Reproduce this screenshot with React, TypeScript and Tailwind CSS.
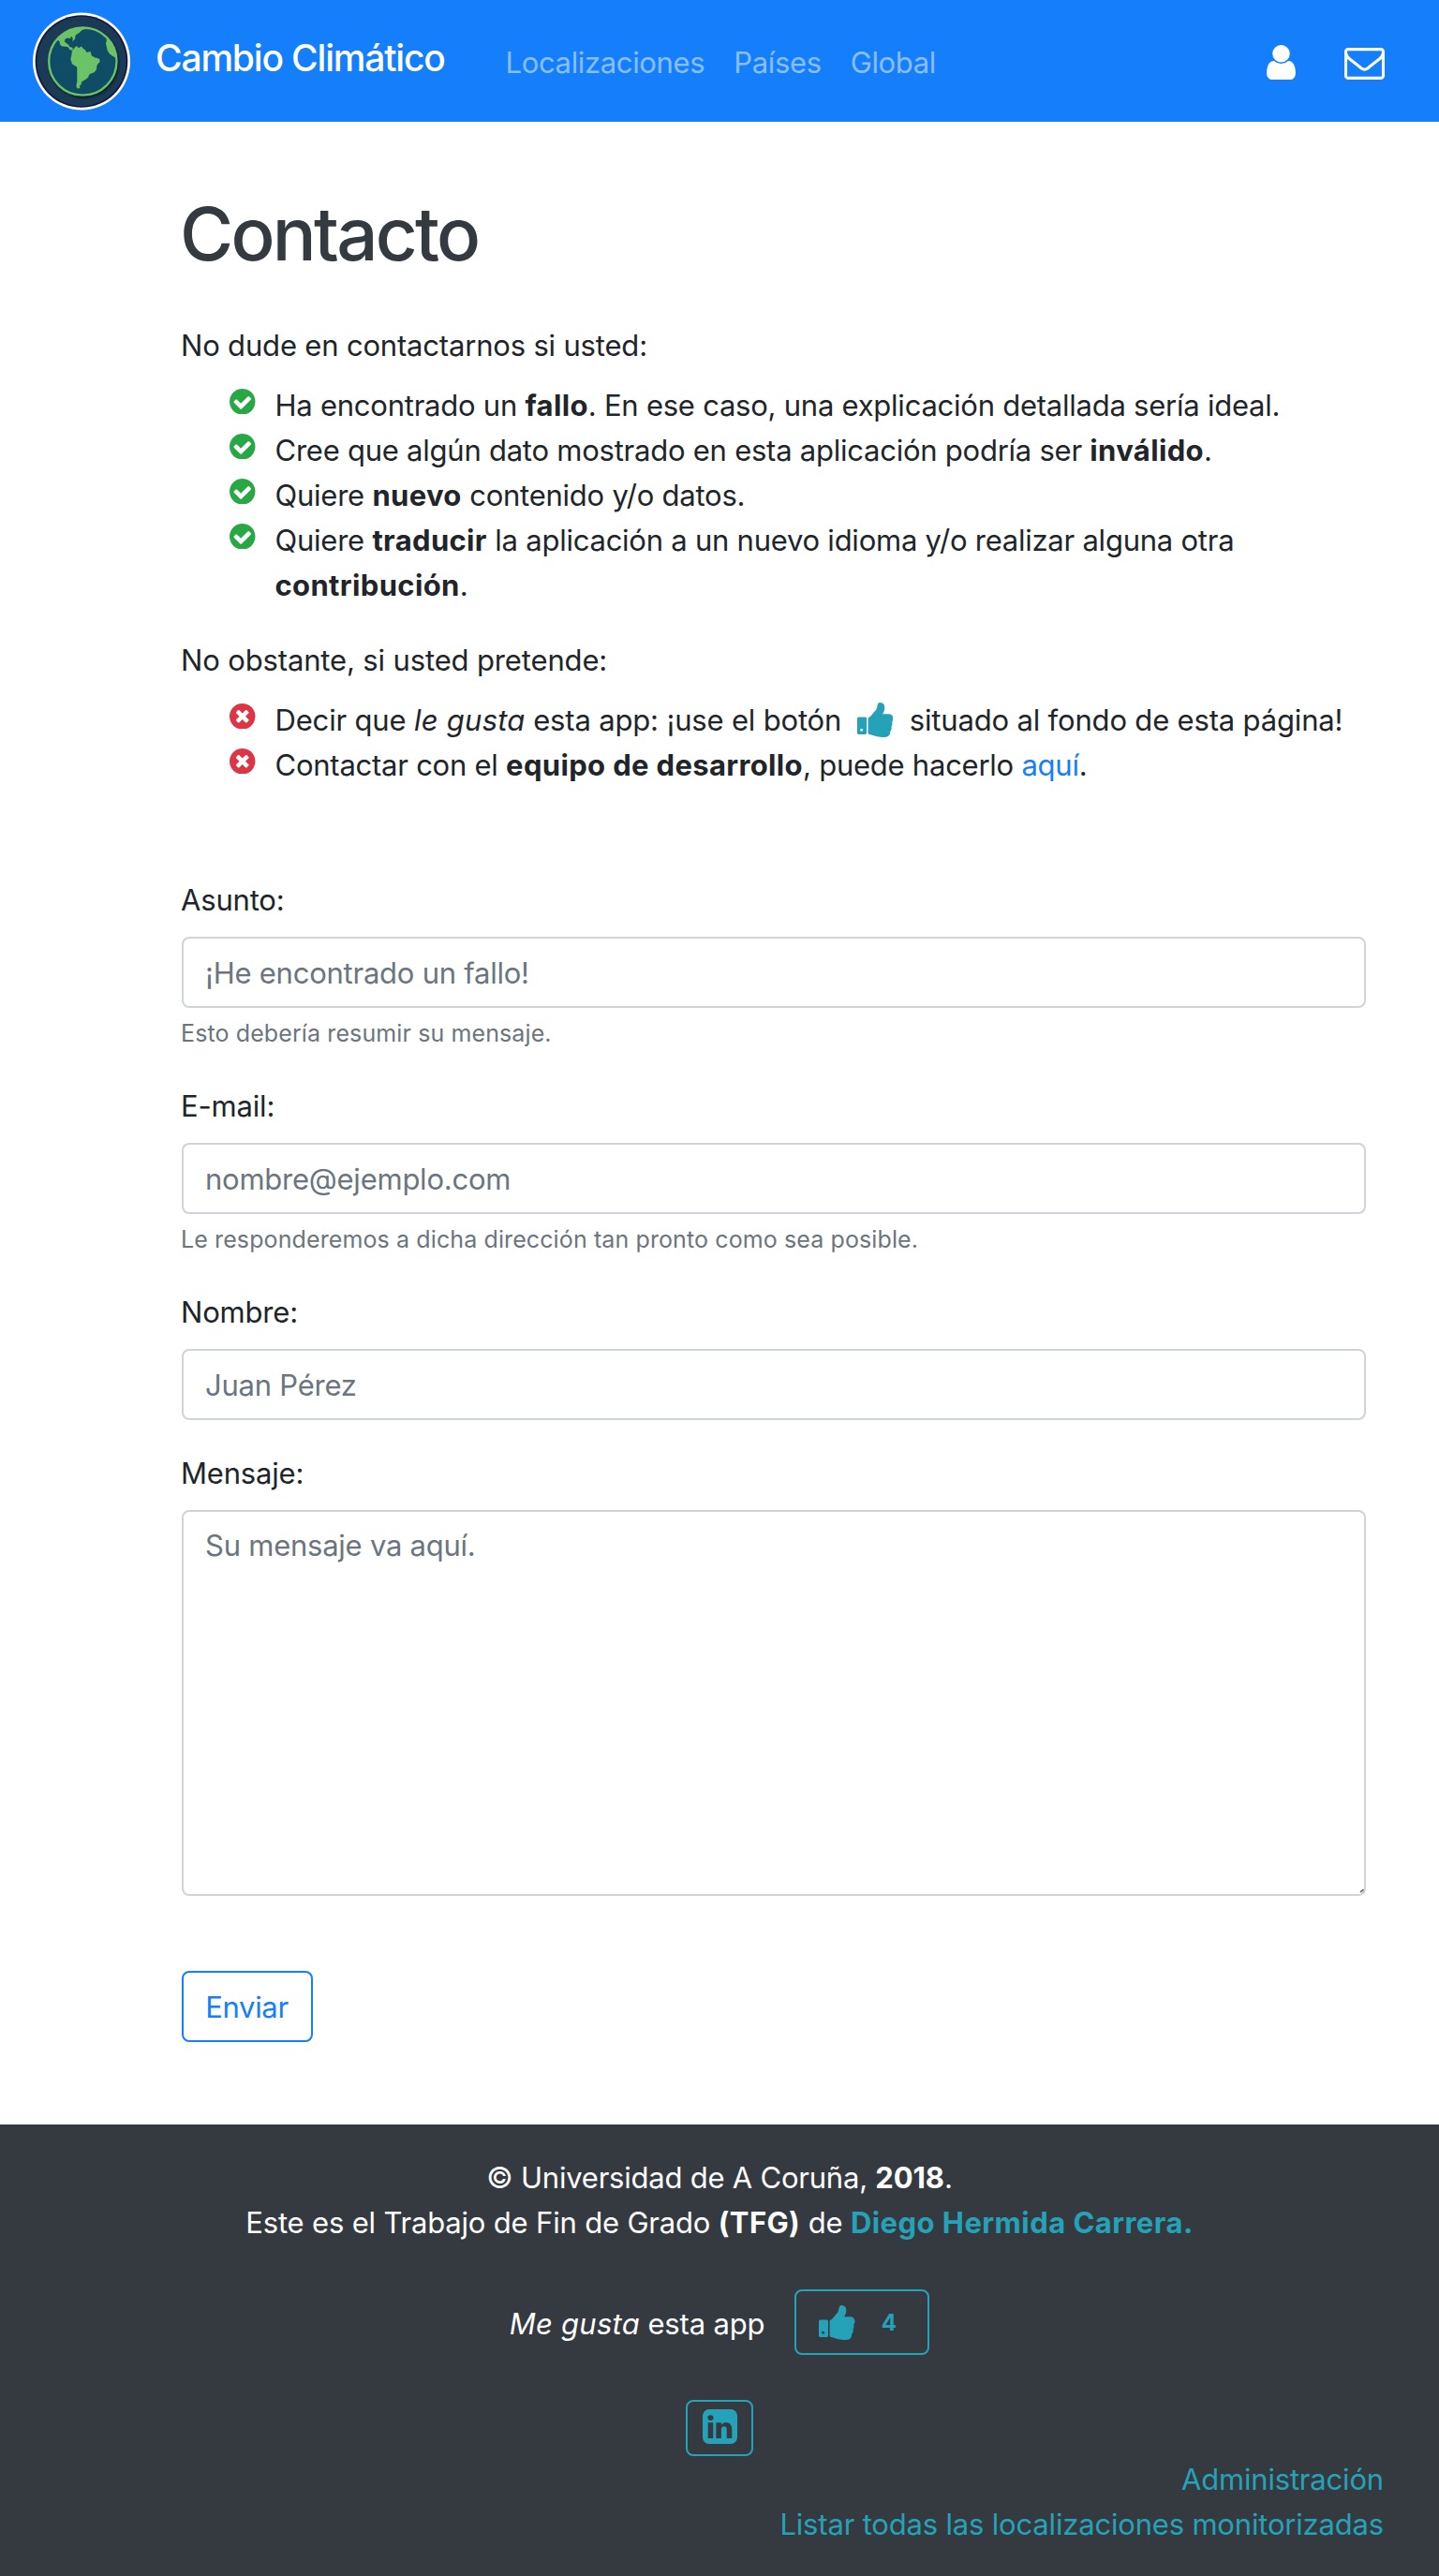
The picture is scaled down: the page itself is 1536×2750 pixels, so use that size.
import type { ReactNode } from "react";

const paths = {
  user: "M1536 1399q0 109-62.5 187t-150.5 78h-854q-88 0-150.5-78t-62.5-187q0-85 8.5-160.5t31.5-152 58.5-131 94-89 134.5-34.5q131 128 313 128t313-128q76 0 134.5 34.5t94 89 58.5 131 31.5 152 8.5 160.5zm-256-887q0 159-112.5 271.5t-271.5 112.5-271.5-112.5-112.5-271.5 112.5-271.5 271.5-112.5 271.5 112.5 112.5 271.5z",
  envelope:
    "M1664 1504v-768q-32 36-69 66-268 206-426 338-51 43-83 67t-86.5 48.5-102.5 24.5h-2q-48 0-102.5-24.5t-86.5-48.5-83-67q-158-132-426-338-37-30-69-66v768q0 13 9.5 22.5t22.5 9.5h1472q13 0 22.5-9.5t9.5-22.5zm0-1051v-24.5l-.5-13-3-12.5-5.5-9-9-7.5-14-2.5h-1472q-13 0-22.5 9.5t-9.5 22.5q0 168 147 284 193 152 401 317 6 5 35 29.5t46 37.5 44.5 31.5 50.5 27.5 43 9h2q20 0 43-9t50.5-27.5 44.5-31.5 46-37.5 35-29.5q208-165 401-317 54-43 100.5-115.5t46.5-131.5zm128-37v1088q0 66-47 113t-113 47h-1472q-66 0-113-47t-47-113v-1088q0-66 47-113t113-47h1472q66 0 113 47t47 113z",
  check:
    "M1412 734q0-28-18-46l-91-90q-19-19-45-19t-45 19l-408 407-226-226q-19-19-45-19t-45 19l-91 90q-18 18-18 46 0 27 18 45l362 362q19 19 45 19 27 0 46-19l543-543q18-18 18-45zm252 162q0 209-103 385.5t-279.5 279.5-385.5 103-385.5-103-279.5-279.5-103-385.5 103-385.5 279.5-279.5 385.5-103 385.5 103 279.5 279.5 103 385.5z",
  times:
    "M1277 1122q0-26-19-45l-181-181 181-181q19-19 19-45 0-27-19-46l-90-90q-19-19-46-19-26 0-45 19l-181 181-181-181q-19-19-45-19-27 0-46 19l-90 90q-19 19-19 46 0 26 19 45l181 181-181 181q-19 19-19 45 0 27 19 46l90 90q19 19 46 19 26 0 45-19l181-181 181 181q19 19 45 19 27 0 46-19l90-90q19-19 19-46zm387-226q0 209-103 385.5t-279.5 279.5-385.5 103-385.5-103-279.5-279.5-103-385.5 103-385.5 279.5-279.5 385.5-103 385.5 103 279.5 279.5 103 385.5z",
  thumb:
    "M320 1344q0-26-19-45t-45-19q-27 0-45.5 19t-18.5 45q0 27 18.5 45.5t45.5 18.5q26 0 45-18.5t19-45.5zm160-512v640q0 26-19 45t-45 19h-288q-26 0-45-19t-19-45v-640q0-26 19-45t45-19h288q26 0 45 19t19 45zm1184 0q0 86-55 149 15 44 15 76 3 76-43 137 17 56 0 117-15 57-54 94 9 112-49 181-64 76-197 78h-129q-66 0-144-15.5t-121.5-29-120.5-39.5q-123-43-158-44-26-1-45-19.5t-19-44.5v-641q0-25 18-43.5t43-20.5q24-2 76-59t101-121q68-87 101-120 18-18 31-48t17.5-48.5 13.5-60.5q7-39 12.5-61t19.5-52 34-50q19-19 45-19 46 0 82.5 10.5t60 26 40 40.5 24 45 12 50 5 45 .5 39q0 38-9.5 76t-19 60-27.5 56q-3 6-10 18t-11 22-8 24h277q78 0 135 57t57 135z",
  linkedin:
    "M365 1414h231v-694h-231v694zm246-908q-1-52-36-86t-93-34-94.5 34-36.5 86q0 51 35.5 85.5t92.5 34.5h1q59 0 95-34.5t36-85.5zm585 908h231v-398q0-154-73-233t-193-79q-136 0-209 117h2v-101h-231q3 66 0 694h231v-388q0-38 7-56 15-35 45-59.5t74-24.5q116 0 116 157v371zm468-998v960q0 119-84.5 203.5t-203.5 84.5h-960q-119 0-203.5-84.5t-84.5-203.5v-960q0-119 84.5-203.5t203.5-84.5h960q119 0 203.5 84.5t84.5 203.5z",
};

function Icon({ name, box, className }: { name: keyof typeof paths; box: string; className: string }) {
  return (
    <svg viewBox={box} fill="currentColor" className={className} aria-hidden="true">
      <path d={paths[name]} />
    </svg>
  );
}

function Globe() {
  return (
    <svg viewBox="105 39 312 314" className="h-[105px] w-[104px] shrink-0" aria-hidden="true">
      <defs>
        <clipPath id="sphere">
          <circle cx="265" cy="196" r="109" />
        </clipPath>
        <filter id="shade" x="-20%" y="-20%" width="140%" height="140%">
          <feGaussianBlur stdDeviation="4" />
        </filter>
      </defs>
      <circle cx="261" cy="196" r="156" fill="#fff" />
      <circle cx="261" cy="196" r="148" fill="#14163f" />
      <circle cx="261" cy="196" r="143" fill="#1b3a55" />
      <circle cx="269" cy="202" r="110" fill="#06121f" filter="url(#shade)" />
      <circle cx="265" cy="196" r="108" fill="#0f4c66" />
      <g clipPath="url(#sphere)" fill="#6cc267" stroke="#0c3f5c" strokeWidth="1.5" strokeLinejoin="round">
        <path d="M184 128 L190 133 192 144 200 149 216 150 224 160 231 162 238 161 232 151 223 149 221 143 212 137 207 132 210 124 219 122 226 125 228 117 232 122 231 135 241 124 243 112 252 107 262 97 274 93 290 94 290 70 200 70 160 120Z" />
        <path d="M230 162 L236 155 244 146 252 152 262 147 266 154 275 160 277 166 291 164 294 177 304 183 319 187 321 197 312 207 309 224 302 232 287 238 283 248 274 255 262 262 261 269 256 275 257 283 248 284 243 276 246 260 246 215 230 205 225 189 228 176Z" />
        <path d="M336 115 L341 127 338 138 343 161 350 172 359 179 372 187 390 180 380 110Z" />
      </g>
      <circle cx="265" cy="196" r="108.5" fill="none" stroke="#6cc267" strokeWidth="7" />
    </svg>
  );
}

function Item({ ok, children }: { ok: boolean; children: ReactNode }) {
  return (
    <li className="flex pl-[51px]">
      <Icon
        name={ok ? "check" : "times"}
        box="128 128 1536 1536"
        className={
          ok
            ? "mt-[5.5px] mr-[21px] size-[27.5px] shrink-0 text-[#28a745]"
            : "mt-[5.5px] mr-[21px] size-[27.5px] shrink-0 text-[#dc3545]"
        }
      />
      <div className="tracking-[-0.24px]">{children}</div>
    </li>
  );
}

const B = ({ children }: { children: ReactNode }) => (
  <strong className="font-bold tracking-[0.35px]">{children}</strong>
);

function Field({ label, placeholder, help }: { label: string; placeholder: string; help?: string }) {
  return (
    <div className={help ? "h-[220px]" : "h-[172px]"}>
      <label className="-ml-px block pt-px">{label}</label>
      <input
        type="text"
        placeholder={placeholder}
        className="mt-[15px] block h-[76px] w-full rounded-lg border-2 border-[#ced4da] bg-white pr-6 pl-[23px] tracking-[-0.24px] placeholder:text-[#6c757d] placeholder:opacity-100"
      />
      {help && (
        <small className="mt-[7px] -ml-px block text-[25px] leading-10 tracking-[0.11px] text-[#6c757d]">{help}</small>
      )}
    </div>
  );
}

export default function App() {
  return (
    <div className="min-h-[2750px] w-full bg-white font-['Inter',sans-serif] text-[31px] leading-12 tracking-[-0.18px] text-[#212529]">
      <nav className="flex h-[130px] items-center bg-[#147efb] pr-[58px] pl-[35px]">
        <Globe />
        <a className="mb-[7px] ml-[27px] w-[373.5px] text-[39px] leading-[60px] font-medium tracking-[-1.175px] text-white">
          Cambio Climático
        </a>
        <div className="mt-[3px] flex grow gap-[31px] tracking-[-0.35px] text-white/50">
          <a>Localizaciones</a>
          <a>Países</a>
          <a>Global</a>
        </div>
        <div className="flex items-end gap-[52px] pt-[3px] text-white">
          <Icon name="user" box="256 128 1280 1536" className="h-[37px] w-[31px]" />
          <Icon name="envelope" box="0 256 1792 1408" className="h-[34px] w-[43px]" />
        </div>
      </nav>

      <main className="ml-[194px] h-[2138px] w-[1264px] pt-[72px]">
        <h1 className="mb-[47px] -ml-[2px] text-[78px] leading-24 font-medium tracking-[-2.75px] text-[#343a40]">Contacto</h1>
        <p className="-ml-px">No dude en contactarnos si usted:</p>
        <ul className="mt-4 mb-8">
          <Item ok>
            Ha encontrado un <B>fallo</B>. En ese caso, una explicación detallada sería ideal.
          </Item>
          <Item ok>
            Cree que algún dato mostrado en esta aplicación podría ser <B>inválido</B>.
          </Item>
          <Item ok>
            Quiere <B>nuevo</B> contenido y/o datos.
          </Item>
          <Item ok>
            Quiere <B>traducir</B> la aplicación a un nuevo idioma y/o realizar alguna otra <B>contribución</B>.
          </Item>
        </ul>
        <p className="-ml-px tracking-[-0.14px]">No obstante, si usted pretende:</p>
        <ul className="mt-4 mb-[95px]">
          <Item ok={false}>
            <span className="tracking-[-0.17px]">
              Decir que <em className="tracking-[0.25px]">le gusta</em> esta app: ¡use el botón{" "}
              <Icon
                name="thumb"
                box="64 128 1600 1536"
                className="mr-[9px] ml-2 -mt-2 inline-block h-[37px] w-[38.5px] align-[-7px] text-[#26a2b8]"
              />{" "}
              situado al fondo de esta página!
            </span>
          </Item>
          <Item ok={false}>
            Contactar con el <B>equipo de desarrollo</B>, puede hacerlo <a className="text-[#147efb]">aquí</a>.
          </Item>
        </ul>

        <form>
          <Field label="Asunto:" placeholder="¡He encontrado un fallo!" help="Esto debería resumir su mensaje." />
          <Field
            label="E-mail:"
            placeholder="nombre@ejemplo.com"
            help="Le responderemos a dicha dirección tan pronto como sea posible."
          />
          <Field label="Nombre:" placeholder="Juan Pérez" />
          <label className="-ml-px block pt-px">Mensaje:</label>
          <div className="relative mt-[15px] mb-20 h-[412px]">
            <textarea
              placeholder="Su mensaje va aquí."
              className="block h-full w-full resize-none rounded-lg border-2 border-[#ced4da] bg-white py-3 pr-6 pl-[23px] tracking-[-0.24px] placeholder:text-[#6c757d] placeholder:opacity-100"
            />
            <svg viewBox="0 0 6 6" className="absolute right-[1px] bottom-[2px] size-[6px]" aria-hidden="true">
              <path d="M1 4 L4.500 1" stroke="#555" strokeWidth="1.600" />
              <path d="M3.500 5 L5.500 3" stroke="#bbb" strokeWidth="1.500" />
            </svg>
          </div>
          <button
            type="button"
            className="block h-[76px] w-[140px] rounded-lg border-2 border-[#147efb] pt-px pr-px text-center tracking-[-0.35px] text-[#147efb]"
          >
            Enviar
          </button>
        </form>
      </main>

      <footer className="h-[482px] bg-[#343a40] pt-[33px] text-center text-white">
        <p className="tracking-[-0.22px]">
          © Universidad de A Coruña, <strong className="font-bold tracking-[-0.1px]">2018</strong>.
        </p>
        <p>
          Este es el Trabajo de Fin de Grado <B>(TFG)</B> de{" "}
          <a className="font-bold tracking-[0.45px] text-[#26a2b8]">Diego Hermida Carrera.</a>
        </p>
        <div className="mt-[47px] flex items-center justify-center gap-8">
          <span className="pt-[3px]">
            <em className="tracking-[0.25px]">Me gusta</em> esta app
          </span>
          <button
            type="button"
            className="flex h-[70px] w-[144px] items-center rounded-lg border-2 border-[#26a2b8] pl-6 text-[#26a2b8]"
          >
            <Icon name="thumb" box="64 128 1600 1536" className="h-[37px] w-[38.500px]" />
            <span className="ml-7 pt-px text-2xl font-bold">4</span>
          </button>
        </div>
        <button
          type="button"
          className="mx-auto mt-12 flex h-[60px] w-[72px] justify-center rounded-lg border-2 border-[#26a2b8] pt-2 text-[#26a2b8]"
        >
          <Icon name="linkedin" box="128 128 1536 1536" className="size-[37px]" />
        </button>
        <div className="flex flex-col items-end pt-px pr-[59px] text-[#26a2b8]">
          <a>Administración</a>
          <a>Listar todas las localizaciones monitorizadas</a>
        </div>
      </footer>
    </div>
  );
}
